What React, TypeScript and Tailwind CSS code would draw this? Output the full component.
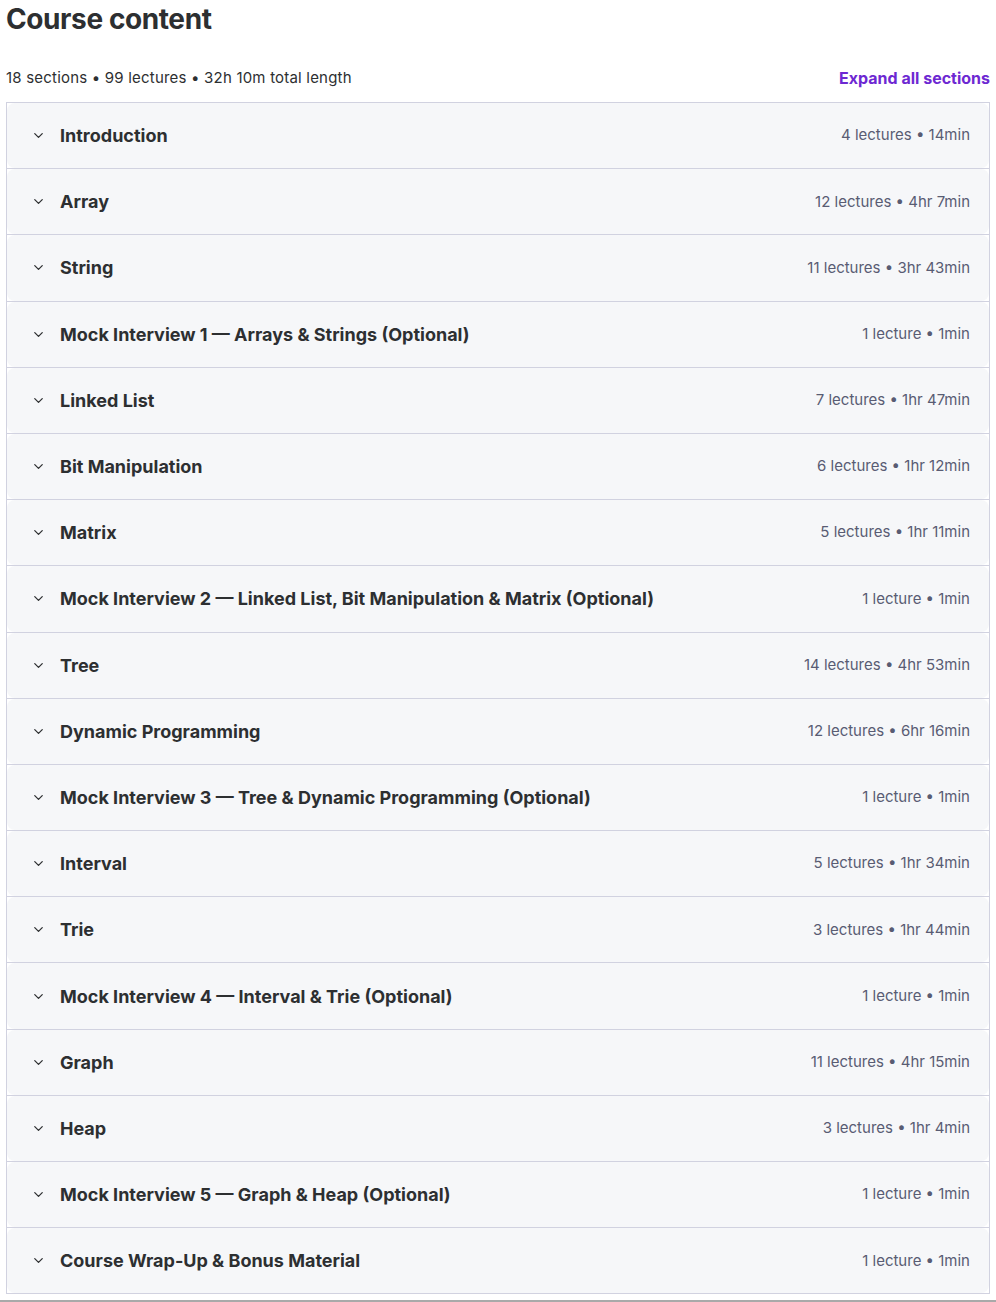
import { ChevronDown } from "lucide-react";

const sections: { title: string; meta: string }[] = [
  { title: "Introduction", meta: "4 lectures • 14min" },
  { title: "Array", meta: "12 lectures • 4hr 7min" },
  { title: "String", meta: "11 lectures • 3hr 43min" },
  { title: "Mock Interview 1 — Arrays & Strings (Optional)", meta: "1 lecture • 1min" },
  { title: "Linked List", meta: "7 lectures • 1hr 47min" },
  { title: "Bit Manipulation", meta: "6 lectures • 1hr 12min" },
  { title: "Matrix", meta: "5 lectures • 1hr 11min" },
  { title: "Mock Interview 2 — Linked List, Bit Manipulation & Matrix (Optional)", meta: "1 lecture • 1min" },
  { title: "Tree", meta: "14 lectures • 4hr 53min" },
  { title: "Dynamic Programming", meta: "12 lectures • 6hr 16min" },
  { title: "Mock Interview 3 — Tree & Dynamic Programming (Optional)", meta: "1 lecture • 1min" },
  { title: "Interval", meta: "5 lectures • 1hr 34min" },
  { title: "Trie", meta: "3 lectures • 1hr 44min" },
  { title: "Mock Interview 4 — Interval & Trie (Optional)", meta: "1 lecture • 1min" },
  { title: "Graph", meta: "11 lectures • 4hr 15min" },
  { title: "Heap", meta: "3 lectures • 1hr 4min" },
  { title: "Mock Interview 5 — Graph & Heap (Optional)", meta: "1 lecture • 1min" },
  { title: "Course Wrap-Up & Bonus Material", meta: "1 lecture • 1min" },
];

export default function App() {
  return (
    <div className="min-h-[1302px] bg-white font-['Inter',sans-serif] text-[#2d2f31]">
      <div className="px-[6px]">
        <h2 className="pt-[1px] text-[28px] font-bold leading-[36px] tracking-[-0.4px]">Course content</h2>

        <div className="mt-[29px] flex items-end justify-between pb-[12px]">
          <span className="text-[15px] leading-[24px] tracking-[0.2px]">18 sections • 99 lectures • 32h 10m total length</span>
          <button className="text-[16px] font-bold leading-[24px] text-[#6d28d2]">Expand all sections</button>
        </div>

        <div className="border-x border-b border-[#d1d2e0] bg-white">
          {sections.map((s) => (
            <div key={s.title} className="border-t border-[#d1d2e0]">
              <div className="flex h-[65.2px] items-center justify-between rounded-lg bg-[#f6f7f9] pl-[24px] pr-[19px]">
                <div className="flex items-center gap-[14px]">
                  <ChevronDown className="h-[15px] w-[15px] text-[#2d2f31]" strokeWidth={2} />
                  <span className="text-[18px] font-bold">{s.title}</span>
                </div>
                <span className="text-[15px] text-[#595c73]">{s.meta}</span>
              </div>
            </div>
          ))}
        </div>
      </div>
      <div className="mt-[6px] h-[2px] bg-[#a9a9a9]" />
    </div>
  );
}
